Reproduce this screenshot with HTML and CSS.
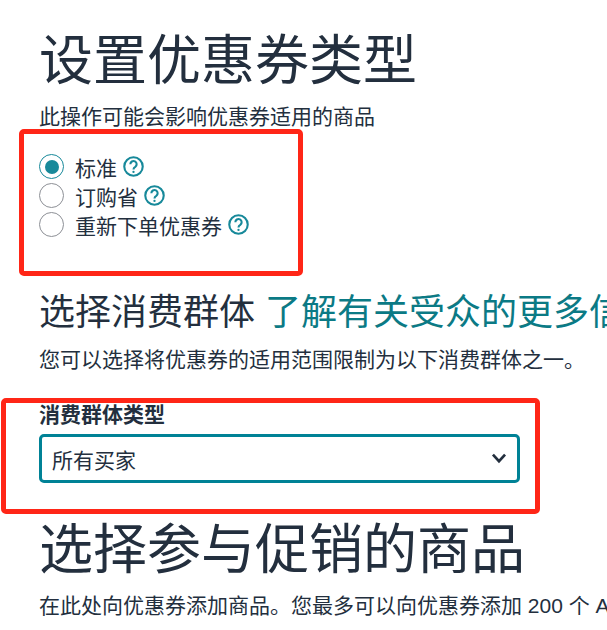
FILE: index.html
```html
<!DOCTYPE html>
<html lang="zh">
<head>
<meta charset="utf-8">
<title>设置优惠券类型</title>
<link rel="stylesheet" href="styles.css">
</head>
<body>
<main class="page">
  <h1 class="title first">设置优惠券类型</h1>
  <p class="text sub">此操作可能会影响优惠券适用的商品</p>
  <div class="radios">
    <label class="radio"><span class="dot on"></span><span>标准</span>
      <svg class="help" viewBox="0 0 20 20"><circle cx="10" cy="10" r="8.8"/><path d="M7 7.8a3 3 0 1 1 4.7 2.5c-1.1.7-1.7 1.2-1.7 2.5"/><circle class="pt" cx="10" cy="15.2" r="1.1"/></svg></label>
    <label class="radio"><span class="dot"></span><span>订购省</span>
      <svg class="help" viewBox="0 0 20 20"><circle cx="10" cy="10" r="8.8"/><path d="M7 7.8a3 3 0 1 1 4.7 2.5c-1.1.7-1.7 1.2-1.7 2.5"/><circle class="pt" cx="10" cy="15.2" r="1.1"/></svg></label>
    <label class="radio"><span class="dot"></span><span>重新下单优惠券</span>
      <svg class="help" viewBox="0 0 20 20"><circle cx="10" cy="10" r="8.8"/><path d="M7 7.8a3 3 0 1 1 4.7 2.5c-1.1.7-1.7 1.2-1.7 2.5"/><circle class="pt" cx="10" cy="15.2" r="1.1"/></svg></label>
  </div>
  <h2 class="heading">选择消费群体 <a class="link">了解有关受众的更多信息</a></h2>
  <p class="text desc">您可以选择将优惠券的适用范围限制为以下消费群体之一。</p>
  <div class="field-label">消费群体类型</div>
  <div class="select"><span>所有买家</span>
    <svg class="chev" viewBox="0 0 14 10"><path d="M1.5 1.5 7 7.5l5.500-6"/></svg>
  </div>
  <h1 class="title second">选择参与促销的商品</h1>
  <p class="text foot">在此处向优惠券添加商品。您最多可以向优惠券添加 200 个 ASIN。</p>
</main>
<div class="mark mark-a"></div>
<div class="mark mark-b"></div>
</body>
</html>
```

FILE: styles.css
```css
* { box-sizing: border-box; }
html, body { margin: 0; height: 630px; overflow: hidden; background: #fff; }
body { position: relative; width: 607px; font-family: "Liberation Sans", "Noto Sans CJK SC", sans-serif; color: #232f3e; }
.page { padding: 0 0 0 39px; white-space: nowrap; }
.title { margin: 0; font-size: 54px; line-height: 64px; font-weight: 400; }
.title.first { padding-top: 29px; height: 94px; }
.title.second { margin-top: 35px; }
.text { margin: 0; font-size: 21px; line-height: 30px; }
.sub { margin-top: 8px; }
.radios { margin-top: 20px; display: flex; flex-direction: column; }
.radio { display: flex; align-items: center; height: 29px; font-size: 21px; }
.dot { width: 25px; height: 25px; border: 1.5px solid #8d9096; border-radius: 50%; margin-right: 11px; display: flex; align-items: center; justify-content: center; }
.dot.on { border-color: #17899a; }
.dot.on::after { content: ""; width: 14px; height: 14px; border-radius: 50%; background: #17899a; }
.help { width: 21px; height: 21px; margin-left: 6px; fill: none; stroke: #17899a; stroke-width: 2; }
.help .pt { fill: #17899a; stroke: none; }
.heading { margin: 0; margin-top: 50px; font-size: 36px; line-height: 48px; font-weight: 400; }
.link { color: #0b7a85; }
.desc { margin-top: 8px; }
.field-label { margin-top: 25px; font-size: 21px; line-height: 30px; font-weight: 700; }
.select { margin-top: 4px; width: 481px; height: 49px; border: 3px solid #008296; border-radius: 5px; padding: 0 10px; display: flex; align-items: center; justify-content: space-between; font-size: 21px; }
.chev { width: 16px; height: 11px; fill: none; stroke: #232f3e; stroke-width: 2.4; }
.foot { margin-top: 9px; }
.mark { position: absolute; border: 5px solid #ff2617; border-radius: 5px; pointer-events: none; }
.mark-a { left: 19px; top: 129px; width: 284px; height: 147px; }
.mark-b { left: 1px; top: 398px; width: 539px; height: 116px; }
```
